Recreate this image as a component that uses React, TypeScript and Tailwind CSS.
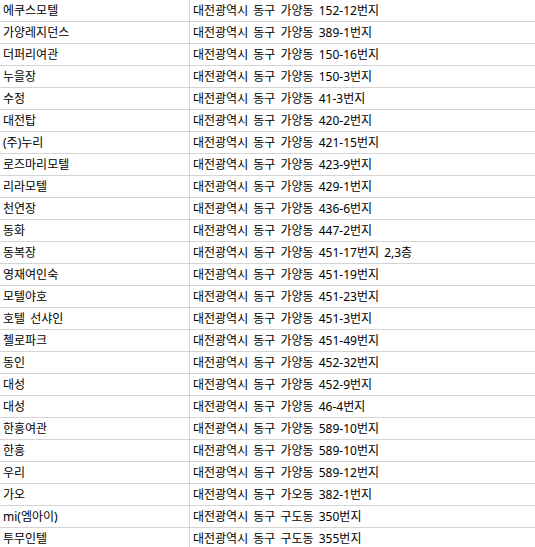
const rows: [string, string][] = [
  ["에쿠스모텔", "대전광역시 동구 가양동 152-12번지"],
  ["가양레지던스", "대전광역시 동구 가양동 389-1번지"],
  ["더퍼리여관", "대전광역시 동구 가양동 150-16번지"],
  ["누을장", "대전광역시 동구 가양동 150-3번지"],
  ["수정", "대전광역시 동구 가양동 41-3번지"],
  ["대전탑", "대전광역시 동구 가양동 420-2번지"],
  ["(주)누리", "대전광역시 동구 가양동 421-15번지"],
  ["로즈마리모텔", "대전광역시 동구 가양동 423-9번지"],
  ["리라모텔", "대전광역시 동구 가양동 429-1번지"],
  ["천연장", "대전광역시 동구 가양동 436-6번지"],
  ["동화", "대전광역시 동구 가양동 447-2번지"],
  ["동복장", "대전광역시 동구 가양동 451-17번지 2,3층"],
  ["영재여인숙", "대전광역시 동구 가양동 451-19번지"],
  ["모텔야호", "대전광역시 동구 가양동 451-23번지"],
  ["호텔 선샤인", "대전광역시 동구 가양동 451-3번지"],
  ["첼로파크", "대전광역시 동구 가양동 451-49번지"],
  ["동인", "대전광역시 동구 가양동 452-32번지"],
  ["대성", "대전광역시 동구 가양동 452-9번지"],
  ["대성", "대전광역시 동구 가양동 46-4번지"],
  ["한흥여관", "대전광역시 동구 가양동 589-10번지"],
  ["한흥", "대전광역시 동구 가양동 589-10번지"],
  ["우리", "대전광역시 동구 가양동 589-12번지"],
  ["가오", "대전광역시 동구 가오동 382-1번지"],
  ["mi(엠아이)", "대전광역시 동구 구도동 350번지"],
  ["투무인텔", "대전광역시 동구 구도동 355번지"],
];

export default function App() {
  return (
    <div
      className="w-[535px] h-[547px] overflow-hidden bg-white text-[12px] text-black [word-spacing:2px]"
      style={{ fontFamily: '"Noto Sans", "Noto Sans CJK KR", sans-serif' }}
    >
      {rows.map(([name, addr], i) => (
        <div key={i} className="flex h-[22px] border-b border-[#d4d4d4]">
          <div className="w-[189px] shrink-0 pl-[3px] leading-[21px] whitespace-nowrap">{name}</div>
          <div className="flex-1 border-l border-[#d4d4d4] pl-[3px] leading-[21px] whitespace-nowrap">{addr}</div>
        </div>
      ))}
    </div>
  );
}
